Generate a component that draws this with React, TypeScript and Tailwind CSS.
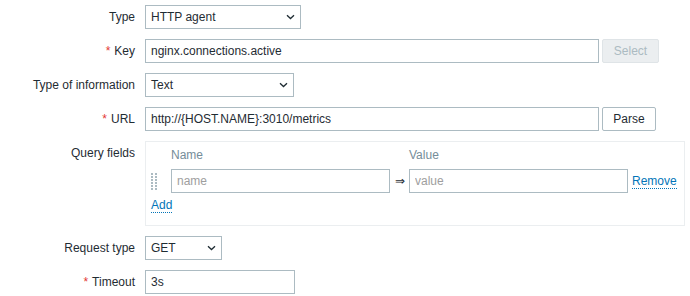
import React from 'react';

function Chevron() {
  return (
    <svg width="9" height="6" viewBox="0 0 9 6" className="shrink-0">
      <path d="M1 1.2l3.5 3.3L8 1.2" fill="none" stroke="#1f2c33" strokeWidth="1.3" />
    </svg>
  );
}

function Label({ text, required }: { text: string; required?: boolean }) {
  return (
    <div className="text-right leading-[24px] whitespace-nowrap">
      {required && <span className="text-[#e33734] mr-[4px]">*</span>}
      {text}
    </div>
  );
}

function FakeSelect({ value, width }: { value: string; width: string }) {
  return (
    <div className={`${width} h-[24px] border border-[#acbbc2] bg-white pl-[5px] pr-[5px] flex items-center justify-between`}>
      <span>{value}</span>
      <Chevron />
    </div>
  );
}

function TextInput({ value, placeholder, width }: { value?: string; placeholder?: string; width: string }) {
  return (
    <input
      readOnly
      value={value ?? ''}
      placeholder={placeholder}
      className={`${width} h-[24px] border border-[#acbbc2] bg-white px-[5px] text-[#1f2c33] outline-none placeholder:text-[#9e9e9e]`}
    />
  );
}

function DragHandle() {
  const dots = [0, 3, 6, 9, 12, 15];
  return (
    <svg width="6" height="17" viewBox="0 0 6 17">
      {dots.map((y) => (
        <g key={y} fill="#acbbc2">
          <rect x="0" y={y} width="2" height="2" />
          <rect x="4" y={y} width="2" height="2" />
        </g>
      ))}
    </svg>
  );
}

export default function App() {
  return (
    <div className="w-[690px] h-[296px] bg-white pt-[5px] pr-[5px] font-['Liberation_Sans',Arial,sans-serif] text-[12px] text-[#1f2c33]">
      <div className="grid grid-cols-[135px_1fr] gap-x-[10px] gap-y-[10px]">
        <Label text="Type" />
        <FakeSelect value="HTTP agent" width="w-[156px]" />

        <Label text="Key" required />
        <div className="flex gap-[3px]">
          <TextInput value="nginx.connections.active" width="w-[454px]" />
          <button className="w-[57px] h-[24px] border border-[#dfe4e7] bg-[#ebeef0] text-[#acbbc2] rounded-[2px]">
            Select
          </button>
        </div>

        <Label text="Type of information" />
        <FakeSelect value="Text" width="w-[149px]" />

        <Label text="URL" required />
        <div className="flex gap-[3px]">
          <TextInput value="http://{HOST.NAME}:3010/metrics" width="w-[454px]" />
          <button className="w-[54px] h-[24px] border border-[#acbbc2] bg-white text-[#1f2c33] rounded-[2px]">
            Parse
          </button>
        </div>

        <Label text="Query fields" />
        <div className="w-[540px] border border-[#ebeef0] pt-[4px] px-[5px] pb-[12px]">
          <div className="grid grid-cols-[20px_219px_19px_219px_auto] gap-y-[5px]">
            <div />
            <div className="leading-[18px] text-[#768d99]">Name</div>
            <div />
            <div className="leading-[18px] text-[#768d99]">Value</div>
            <div />

            <div className="flex items-center">
              <DragHandle />
            </div>
            <TextInput placeholder="name" width="w-[219px]" />
            <div className="flex items-center justify-center">⇒</div>
            <TextInput placeholder="value" width="w-[219px]" />
            <div className="flex items-center pl-[4px]">
              <span className="inline-block leading-[14px] text-[#0275b8] border-b border-dotted border-[#0275b8]">
                Remove
              </span>
            </div>
          </div>
          <div className="flex mt-[5px]">
            <span className="block leading-[14px] text-[#0275b8] border-b border-dotted border-[#0275b8]">
              Add
            </span>
          </div>
        </div>

        <Label text="Request type" />
        <FakeSelect value="GET" width="w-[77px]" />

        <Label text="Timeout" required />
        <TextInput value="3s" width="w-[150px]" />
      </div>
    </div>
  );
}
